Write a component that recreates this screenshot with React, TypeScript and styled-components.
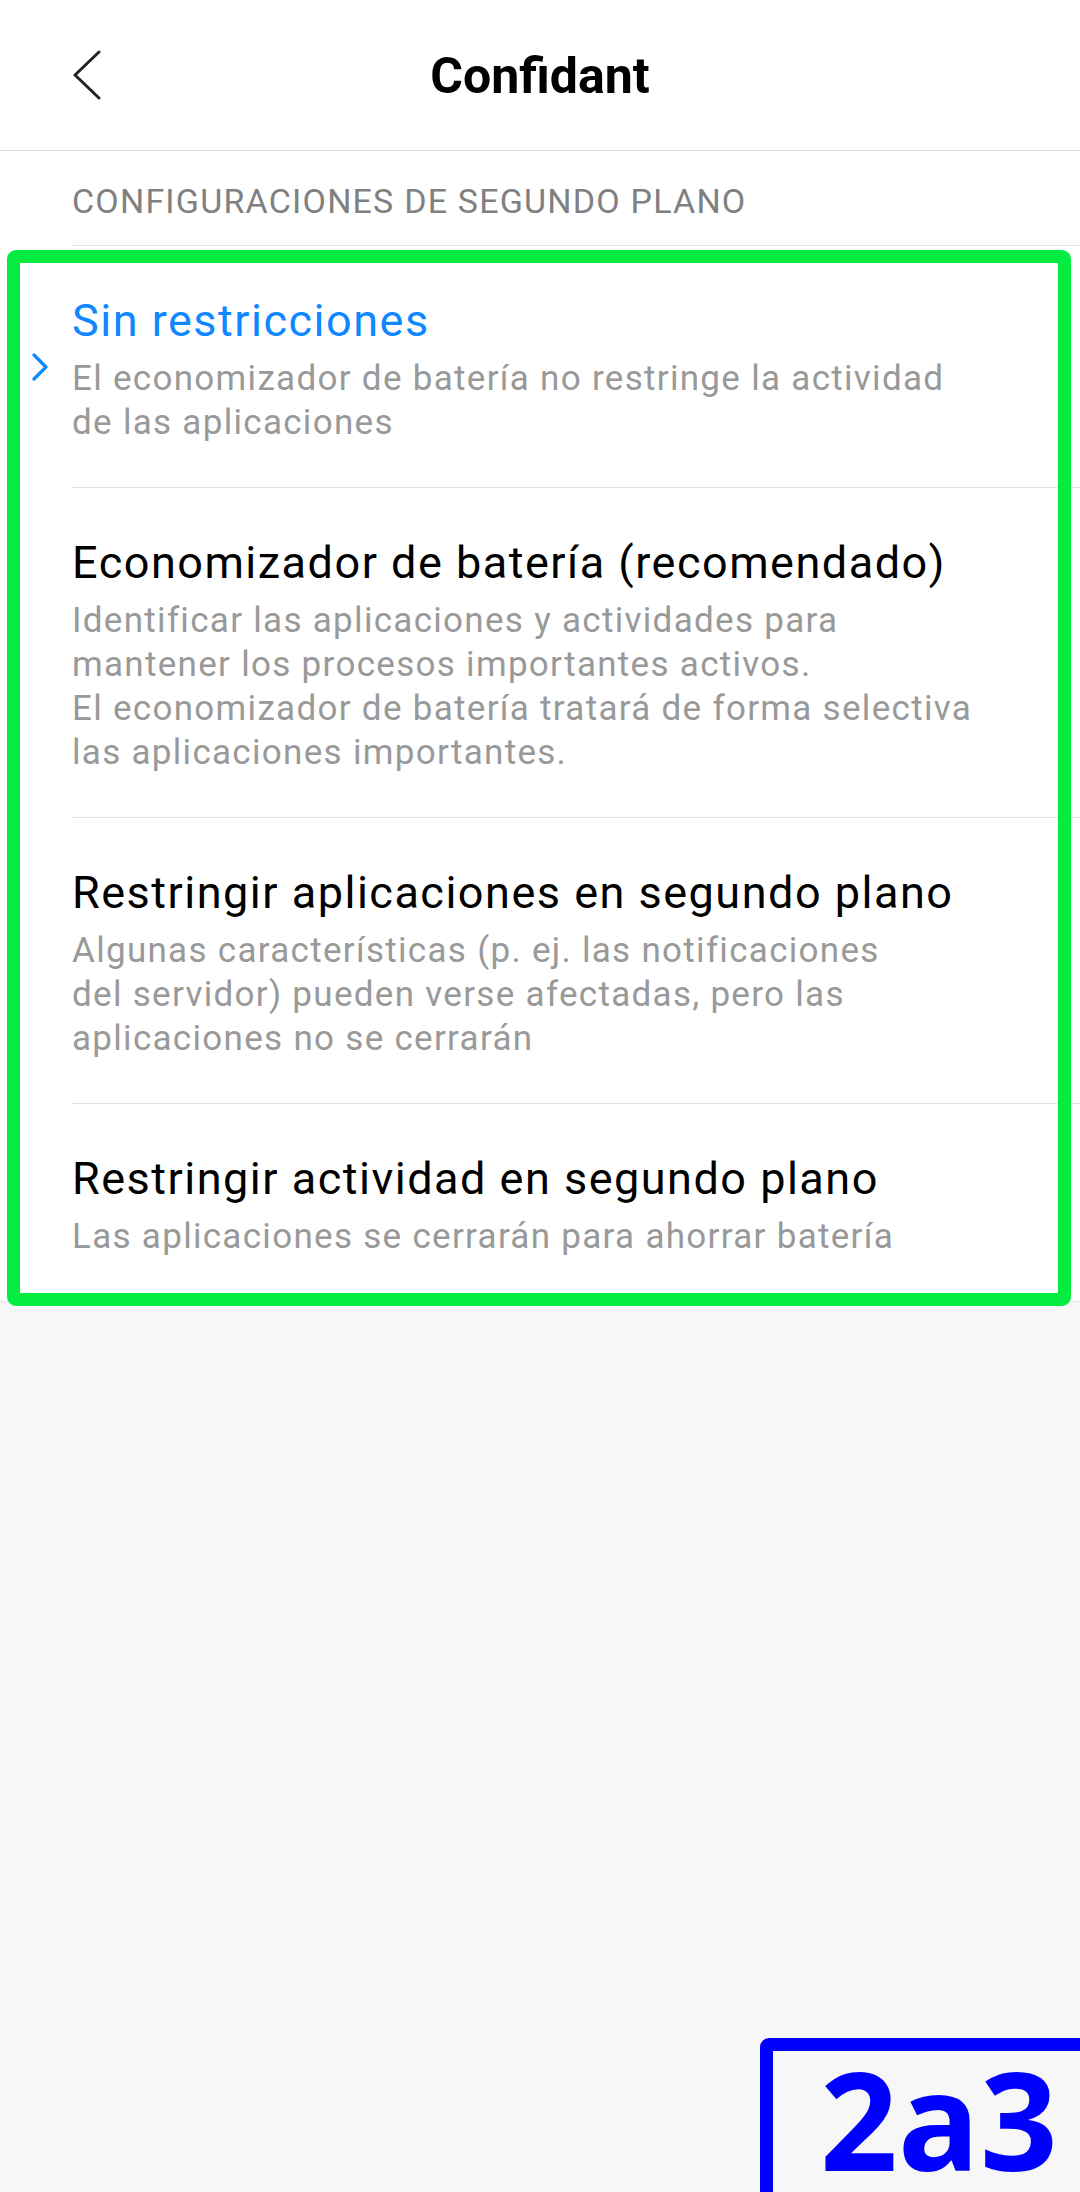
import styled, { createGlobalStyle } from 'styled-components';

const GlobalStyle = createGlobalStyle`
  html, body {
    margin: 0;
    padding: 0;
    background: #f7f7f7;
  }
  body {
    font-family: Roboto, "Noto Sans", "Liberation Sans", sans-serif;
  }
`;

type Option = {
  title: string;
  lines: string[];
  selected?: boolean;
};

const options: Option[] = [
  {
    title: 'Sin restricciones',
    lines: ['El economizador de batería no restringe la actividad', 'de las aplicaciones'],
    selected: true,
  },
  {
    title: 'Economizador de batería (recomendado)',
    lines: [
      'Identificar las aplicaciones y actividades para',
      'mantener los procesos importantes activos.',
      'El economizador de batería tratará de forma selectiva',
      'las aplicaciones importantes.',
    ],
  },
  {
    title: 'Restringir aplicaciones en segundo plano',
    lines: [
      'Algunas características (p. ej. las notificaciones',
      'del servidor) pueden verse afectadas, pero las',
      'aplicaciones no se cerrarán',
    ],
  },
  {
    title: 'Restringir actividad en segundo plano',
    lines: ['Las aplicaciones se cerrarán para ahorrar batería'],
  },
];

export default function App() {
  return (
    <>
      <GlobalStyle />
      <Page>
        <Header>
          <BackButton aria-label="Atrás">
            <svg width="30" height="50" viewBox="0 0 30 50">
              <polyline points="27,2 3,25 27,48" fill="none" stroke="#222" strokeWidth="3" strokeLinecap="round" strokeLinejoin="round" />
            </svg>
          </BackButton>
          <Title>Confidant</Title>
          <span />
        </Header>

        <SectionLabel>CONFIGURACIONES DE SEGUNDO PLANO</SectionLabel>

        <List>
          {options.map((o) => (
            <Item key={o.title}>
              {o.selected && (
                <SelectedMark>
                  <svg width="18" height="28" viewBox="0 0 18 28">
                    <polyline points="3,2 15,14 3,26" fill="none" stroke="#0f87ff" strokeWidth="3.2" strokeLinecap="round" strokeLinejoin="round" />
                  </svg>
                </SelectedMark>
              )}
              <ItemTitle $selected={o.selected}>{o.title}</ItemTitle>
              <ItemText>
                {o.lines.map((l, i) => (
                  <span key={i}>
                    {l}
                    {i < o.lines.length - 1 && <br />}
                  </span>
                ))}
              </ItemText>
            </Item>
          ))}
        </List>

        <GreenFrame />
        <BlueTag>
          <TagText>2a3</TagText>
        </BlueTag>
      </Page>
    </>
  );
}

const Page = styled.div`
  position: relative;
  min-height: 2192px;
  overflow: hidden;
  background: #f7f7f7;
`;

const Header = styled.header`
  height: 151px;
  background: #fff;
  border-bottom: 1px solid #dedede;
  display: grid;
  grid-template-columns: 1fr auto 1fr;
  align-items: center;
  box-sizing: border-box;
`;

const BackButton = styled.button`
  justify-self: start;
  margin-left: 72px;
  padding: 0;
  border: 0;
  background: none;
  display: flex;
  align-items: center;
  cursor: pointer;
`;

const Title = styled.h1`
  margin: 0;
  padding-top: 2px;
  font-size: 50px;
  font-weight: 700;
  color: #000;
  line-height: 60px;
`;

const SectionLabel = styled.div`
  background: #fff;
  padding: 28px 0 22px 72px;
  font-size: 34px;
  line-height: 44px;
  letter-spacing: 1.2px;
  color: #808080;
`;

const List = styled.ul`
  list-style: none;
  margin: 0;
  padding: 0;
  background: #fff;
  border-bottom: 1px solid #e4e4e4;
`;

const Item = styled.li`
  position: relative;
  margin-left: 72px;
  padding: 47px 40px 42px 0;
  border-top: 1px solid #e4e4e4;
`;

const SelectedMark = styled.span`
  position: absolute;
  left: -41px;
  top: 50%;
  transform: translateY(-50%);
  display: flex;
`;

const ItemTitle = styled.div<{ $selected?: boolean }>`
  font-size: 45px;
  line-height: 56px;
  letter-spacing: 1.5px;
  white-space: nowrap;
  color: ${(p) => (p.$selected ? '#0f87ff' : '#000')};
`;

const ItemText = styled.div`
  margin-top: 8px;
  font-size: 35px;
  line-height: 44px;
  letter-spacing: 1.3px;
  white-space: nowrap;
  color: #999;
`;

const GreenFrame = styled.div`
  position: absolute;
  left: 7px;
  top: 250px;
  width: 1064px;
  height: 1056px;
  box-sizing: border-box;
  border: 13px solid #05ec41;
  border-radius: 9px;
  pointer-events: none;
`;

const BlueTag = styled.div`
  position: absolute;
  left: 760px;
  top: 2038px;
  width: 360px;
  height: 220px;
  box-sizing: border-box;
  border: 13px solid #0000ff;
  border-radius: 9px;
  padding-left: 47px;
  pointer-events: none;
`;

const TagText = styled.span`
  display: inline-block;
  margin-top: 8px;
  font-family: "Open Sans", "Noto Sans", sans-serif;
  font-weight: 700;
  font-size: 136px;
  line-height: 120px;
  color: #0000ff;
`;
